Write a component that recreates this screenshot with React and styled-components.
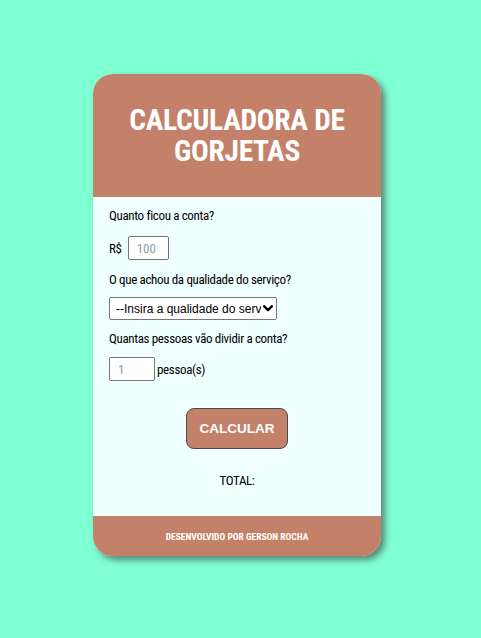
import React from "react";
import styled, { createGlobalStyle } from "styled-components";

const GlobalStyle = createGlobalStyle`
  html, body {
    margin: 0;
    padding: 0;
    background-color: #7fffd4;
  }
  body {
    font-family: "Roboto Condensed", "Roboto", sans-serif;
    font-stretch: condensed;
  }
`;

const chevron =
  "data:image/svg+xml;utf8," +
  encodeURIComponent(
    '<svg xmlns="http://www.w3.org/2000/svg" width="10" height="7" viewBox="0 0 10 7"><path d="M1.2 1.3 L5 5.1 L8.8 1.3" fill="none" stroke="black" stroke-width="2.4" stroke-linecap="round" stroke-linejoin="round"/></svg>'
  );

function App() {
  return (
    <>
      <GlobalStyle />
      <Page>
        <Card>
          <Header>
            <Title>CALCULADORA DE GORJETAS</Title>
          </Header>
          <Body>
            <Label>Quanto ficou a conta?</Label>
            <Row $mt={10} $mb={10} $gap={6}>
              <Unit>R$</Unit>
              <Field type="number" placeholder="100" $width={41} />
            </Row>
            <Label>O que achou da qualidade do serviço?</Label>
            <Row $mt={7} $mb={9} $gap={0}>
              <Select defaultValue="">
                <option value="">--Insira a qualidade do serviço--</option>
                <option value="0.3">30% - Muito bom</option>
                <option value="0.1">10% - Bom</option>
                <option value="0.05">5% - Ruim</option>
              </Select>
            </Row>
            <Label>Quantas pessoas vão dividir a conta?</Label>
            <Row $mt={8} $mb={0} $gap={2}>
              <Field type="number" placeholder="1" $width={46} />
              <Unit>pessoa(s)</Unit>
            </Row>
            <Button>CALCULAR</Button>
            <Total>TOTAL:</Total>
          </Body>
          <Footer>DESENVOLVIDO POR GERSON ROCHA</Footer>
        </Card>
      </Page>
    </>
  );
}

const Page = styled.div`
  min-height: 638px;
  box-sizing: border-box;
  display: flex;
  justify-content: center;
  align-items: flex-start;
  padding: 74px 7px 0 0;
`;

const Card = styled.div`
  width: 288px;
  border-radius: 20px;
  overflow: hidden;
  background-color: #f0ffff;
  box-shadow: 4px 4px 6px rgba(60, 60, 60, 0.6);
  display: flex;
  flex-direction: column;
`;

const Header = styled.div`
  height: 123px;
  background-color: #c38169;
  display: flex;
  align-items: center;
  justify-content: center;
  padding: 0 24px;
`;

const Title = styled.h1`
  margin: 0;
  color: #ffffff;
  font-size: 29.5px;
  line-height: 31px;
  letter-spacing: -0.3px;
  font-weight: 700;
  text-align: center;
`;

const Body = styled.div`
  padding: 9px 16px 27px;
  display: flex;
  flex-direction: column;
`;

const Label = styled.p`
  margin: 0;
  padding: 2px 0;
  font-size: 13px;
  line-height: 16px;
  letter-spacing: -0.35px;
  color: #000000;
`;

const Row = styled.div`
  display: flex;
  align-items: center;
  gap: ${(p) => p.$gap}px;
  margin: ${(p) => p.$mt}px 0 ${(p) => p.$mb}px;
`;

const Unit = styled.span`
  font-size: 13px;
  letter-spacing: -0.35px;
`;

const Field = styled.input`
  width: ${(p) => p.$width}px;
  height: 24px;
  box-sizing: border-box;
  border: 1px solid #767676;
  border-radius: 2px;
  padding: 0 8px;
  font-family: inherit;
  font-stretch: condensed;
  font-size: 13px;
  background: #ffffff;
  &::placeholder {
    color: #8e99ad;
  }
  &::-webkit-inner-spin-button {
    display: none;
  }
`;

const Select = styled.select`
  appearance: none;
  width: 168px;
  height: 23px;
  box-sizing: border-box;
  padding: 0 15px 0 6px;
  font-family: "Liberation Sans", Arial, sans-serif;
  font-size: 12px;
  color: #000000;
  border: 1px solid #767676;
  border-radius: 2px;
  background: #ffffff url("${chevron}") no-repeat right 3px center;
`;

const Button = styled.button`
  align-self: center;
  margin-top: 27px;
  width: 102px;
  height: 41px;
  background-color: #c38169;
  color: #ffffff;
  border: 1px solid #4a4a4a;
  border-radius: 8px;
  font-family: "Liberation Sans", Arial, sans-serif;
  font-weight: 700;
  font-size: 13.5px;
`;

const Total = styled.p`
  margin: 24px 0 0;
  text-align: center;
  font-size: 13px;
  line-height: 16px;
  letter-spacing: -0.35px;
`;

const Footer = styled.div`
  height: 40px;
  background-color: #c38169;
  color: #ffffff;
  font-size: 9.5px;
  font-weight: 700;
  display: flex;
  align-items: center;
  justify-content: center;
`;

export default App;
